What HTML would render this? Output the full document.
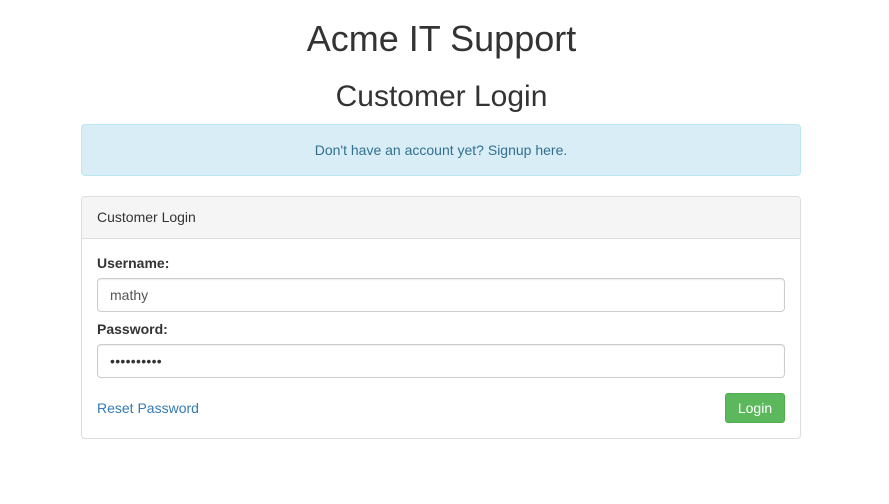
<!DOCTYPE html>
<html><head><meta charset="utf-8"><style>
*{box-sizing:border-box;margin:0;padding:0}
body{width:889px;height:504px;background:#fff;font-family:"Liberation Sans",Arial,sans-serif;color:#333;font-size:14px;position:relative;overflow:hidden}
.a{position:absolute}
h1{position:absolute;left:0;width:883px;text-align:center;font-weight:500;font-size:36px;top:18px}
h2{position:absolute;left:0;width:883px;text-align:center;font-weight:500;font-size:30px;top:80px}
.alert{left:81px;top:124px;width:720px;height:52px;background:#d9edf7;border:1px solid #bce8f1;border-radius:4px;text-align:center;line-height:50px;color:#31708f}
.panel{left:81px;top:196px;width:720px;height:243px;border:1px solid #ddd;border-radius:4px}
.ph{height:42px;background:#f5f5f5;border-bottom:1px solid #ddd;padding:0 15px;line-height:40px;border-radius:4px 4px 0 0}
label{position:absolute;left:15px;font-weight:bold}
.in{position:absolute;left:15px;width:688px;height:34px;border:1px solid #ccc;border-radius:4px;padding:0 12px;line-height:32px;color:#555;box-shadow:inset 0 1px 1px rgba(0,0,0,.075)}
.btn{position:absolute;left:643px;top:196px;width:60px;height:30px;background:#5cb85c;border:1px solid #4cae4c;border-radius:3px;color:#fff;text-align:center;line-height:28px}
</style></head><body>
<h1>Acme IT Support</h1>
<h2>Customer Login</h2>
<div class="a alert">Don't have an account yet? Signup here.</div>
<div class="a panel">
<div class="ph">Customer Login</div>
<label style="top:58px">Username:</label>
<div class="in" style="top:81px">mathy</div>
<label style="top:124px">Password:</label>
<div class="in" style="top:147px;color:#333;font-size:14px;letter-spacing:0.3px">••••••••••</div>
<div class="a" style="left:15px;top:203px;color:#337ab7">Reset Password</div>
<div class="btn">Login</div>
</div>
</body></html>
